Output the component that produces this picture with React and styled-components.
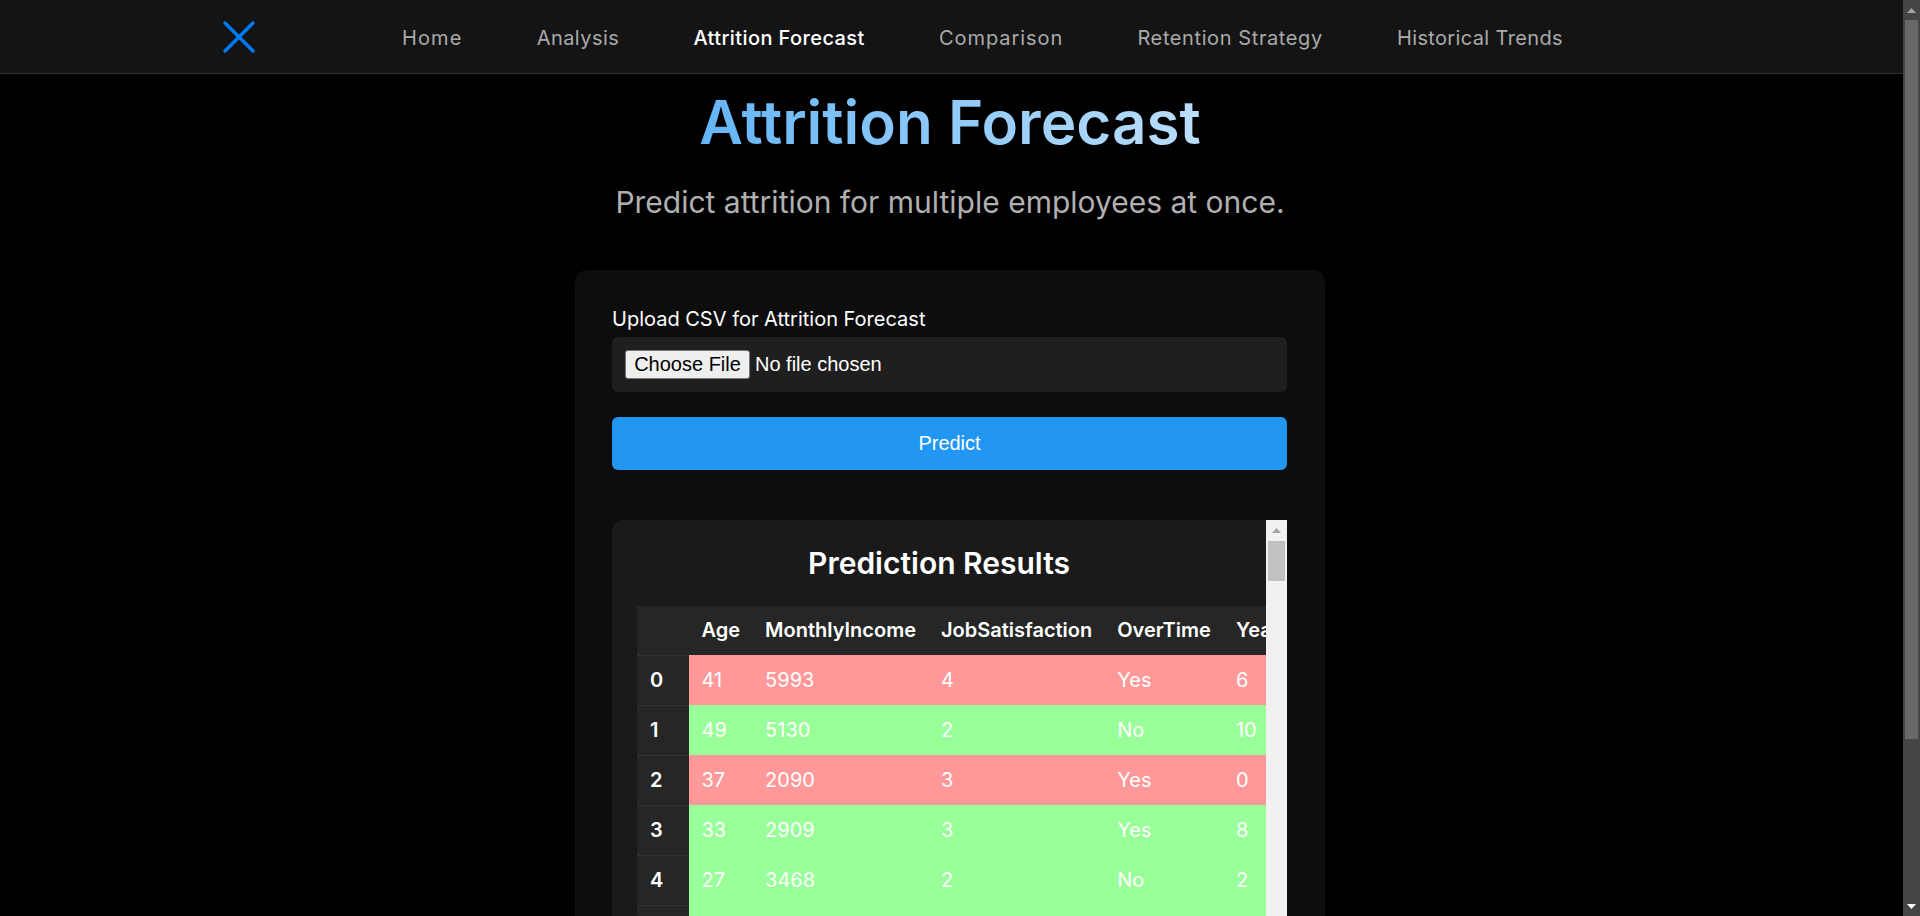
import React from "react";
import styled, { createGlobalStyle } from "styled-components";

const Global = createGlobalStyle`
  html, body { height: 100%; }
  body { margin: 0; background: #000; color: #fff; font-family: Inter, "Liberation Sans", sans-serif; overflow: hidden; }
  #root { height: 100%; }
`;

const Shell = styled.div`
  display: flex;
  height: 100%;
`;

const Viewport = styled.div`
  flex: 1;
  min-width: 0;
  overflow: hidden;
  background: #000;
`;

const Bar = styled.div`
  flex: none;
  display: flex;
  flex-direction: column;
  width: ${(p) => p.$width}px;
  background: ${(p) => p.$track};
`;

const BarButton = styled.div`
  flex: none;
  display: flex;
  align-items: center;
  justify-content: center;
  height: ${(p) => p.$size}px;
`;

const Thumb = styled.div`
  flex: none;
  height: ${(p) => p.$height}px;
  margin: 0 2px;
  background: ${(p) => p.$color};
`;

const BarSpacer = styled.div`
  flex: 1;
`;

const TopBar = styled.nav`
  display: flex;
  align-items: center;
  height: 73px;
  padding-left: 222px;
  background: #141414;
  border-bottom: 1px solid #333;
`;

const Logo = styled.svg`
  width: 34px;
  height: 34px;
  flex: none;
  margin-right: 146px;
`;

const NavList = styled.div`
  display: flex;
  gap: 74.2px;
`;

const NavLink = styled.a`
  font-family: Inter, sans-serif;
  font-size: 20px;
  line-height: 30px;
  padding-top: 2px;
  letter-spacing: ${(p) => p.$spacing}px;
  font-weight: ${(p) => (p.$active ? 500 : 400)};
  color: ${(p) => (p.$active ? "#fff" : "#aaa")};
  white-space: nowrap;
`;

const Main = styled.main`
  display: flex;
  flex-direction: column;
  align-items: center;
  padding-right: 3px;
`;

const Title = styled.h1`
  margin: 13px 0 0;
  font-size: 60.2px;
  line-height: 72px;
  font-weight: 600;
  background: linear-gradient(90deg, #64b5f6, #bbdefb);
  -webkit-background-clip: text;
  background-clip: text;
  color: transparent;
`;

const Subtitle = styled.p`
  margin: 25px 0 0;
  font-size: 30px;
  line-height: 36px;
  color: #b0b0b0;
`;

const Card = styled.section`
  box-sizing: border-box;
  width: 750px;
  margin-top: 50px;
  padding: 37px 38px 37px 37px;
  background: #0d0d0d;
  border-radius: 12px;
`;

const Label = styled.label`
  display: block;
  padding: 1px 0 7px;
  font-family: Inter, "Liberation Sans", sans-serif;
  font-size: 20px;
  line-height: 22px;
`;

const FileBox = styled.div`
  display: flex;
  align-items: center;
  height: 55px;
  padding-left: 13px;
  background: #1f1f1f;
  border-radius: 6px;
  font-family: "Liberation Sans", Arial, sans-serif;
  font-size: 20px;
`;

const FileButton = styled.button`
  box-sizing: border-box;
  width: 125px;
  height: 29px;
  padding: 0;
  margin-right: 5px;
  background: #efefef;
  border: 1px solid #767676;
  border-radius: 3px;
  color: #000;
  font: inherit;
`;

const Predict = styled.button`
  display: block;
  width: 100%;
  height: 53px;
  margin-top: 25px;
  padding: 0;
  background: #2196f3;
  border: 0;
  border-radius: 6px;
  color: #fff;
  font-family: "Liberation Sans", Arial, sans-serif;
  font-size: 20px;
`;

const Results = styled.div`
  display: flex;
  height: 540px;
  margin-top: 50px;
  background: #1a1a1a;
  border-radius: 12px 0 0 12px;
`;

const ResultsBody = styled.div`
  flex: 1;
  min-width: 0;
  padding: 25px 0 0 25px;
  overflow: hidden;
  border-radius: 12px 0 0 12px;
`;

const ResultsTitle = styled.h2`
  margin: 0 25px 25px 0;
  text-align: center;
  font-size: 30px;
  line-height: 36px;
  font-weight: 600;
`;

const Table = styled.table`
  width: max-content;
  border-collapse: collapse;
  font-size: 20px;
  white-space: nowrap;
`;

const HeadCell = styled.th`
  box-sizing: border-box;
  height: 49px;
  padding: 0 12.5px 2px;
  background: #262626;
  text-align: left;
  font-weight: 600;
`;

const IndexCell = styled.th`
  box-sizing: border-box;
  width: 52px;
  height: 50px;
  padding: 0 13px 1px;
  background: #262626;
  border-top: 1px solid #333;
  text-align: left;
  font-weight: 600;
`;

const Cell = styled.td`
  box-sizing: border-box;
  height: 50px;
  padding: 0 12.5px 1px;
  background: ${(p) => (p.$leave ? "#ff9999" : "#99ff99")};
`;

const rows = [
  [41, 5993, 4, "Yes", 6, true],
  [49, 5130, 2, "No", 10, false],
  [37, 2090, 3, "Yes", 0, true],
  [33, 2909, 3, "Yes", 8, false],
  [27, 3468, 2, "No", 2, false],
];
const links = [
  ["Home", 1.1],
  ["Analysis", 0.46],
  ["Attrition Forecast", 0.4],
  ["Comparison", 0.95],
  ["Retention Strategy", 0.6],
  ["Historical Trends", 0.36],
];
const columns = ["", "Age", "MonthlyIncome", "JobSatisfaction", "OverTime", "YearsAtCompany"];

const Up = ({ color }) => (
  <svg width="9" height="5" viewBox="0 0 9 5"><path d="M4.5 0L9 5H0z" fill={color} /></svg>
);
const Down = ({ color }) => (
  <svg width="9" height="5" viewBox="0 0 9 5"><path d="M0 0H9L4.5 5z" fill={color} /></svg>
);

export default function App() {
  return (
    <Shell>
      <Global />
      <Viewport>
        <TopBar>
          <Logo viewBox="0 0 34 34" fill="none" stroke="#007bff" strokeWidth="3.4" strokeLinecap="round">
            <path d="M3 3L31 31M31 3L3 31" />
          </Logo>
          <NavList>
            {links.map(([l, s]) => (
              <NavLink key={l} $spacing={s} $active={l === "Attrition Forecast"}>{l}</NavLink>
            ))}
          </NavList>
        </TopBar>
        <Main>
          <Title>Attrition Forecast</Title>
          <Subtitle>Predict attrition for multiple employees at once.</Subtitle>
          <Card>
            <Label>Upload CSV for Attrition Forecast</Label>
            <FileBox>
              <FileButton>Choose File</FileButton>
              No file chosen
            </FileBox>
            <Predict>Predict</Predict>
            <Results>
              <ResultsBody>
                <ResultsTitle>Prediction Results</ResultsTitle>
                <Table>
                  <thead>
                    <tr>{columns.map((c) => <HeadCell key={c}>{c}</HeadCell>)}</tr>
                  </thead>
                  <tbody>
                    {rows.map((r, i) => (
                      <tr key={i}>
                        <IndexCell>{i}</IndexCell>
                        {r.slice(0, 5).map((v, j) => (
                          <Cell key={j} $leave={r[5]}>{v}</Cell>
                        ))}
                      </tr>
                    ))}
                    <tr>
                      <IndexCell />
                      <Cell colSpan={5} />
                    </tr>
                  </tbody>
                </Table>
              </ResultsBody>
              <Bar $width={21} $track="#f1f1f1">
                <BarButton $size={21}><Up color="#a3a3a3" /></BarButton>
                <Thumb $height={40} $color="#c1c1c1" />
                <BarSpacer />
              </Bar>
            </Results>
          </Card>
        </Main>
      </Viewport>
      <Bar $width={17} $track="#454545">
        <BarButton $size={20}><Up color="#a3a3a3" /></BarButton>
        <Thumb $height={719} $color="#686868" />
        <BarSpacer />
        <BarButton $size={20}><Down color="#ffffff" /></BarButton>
      </Bar>
    </Shell>
  );
}
